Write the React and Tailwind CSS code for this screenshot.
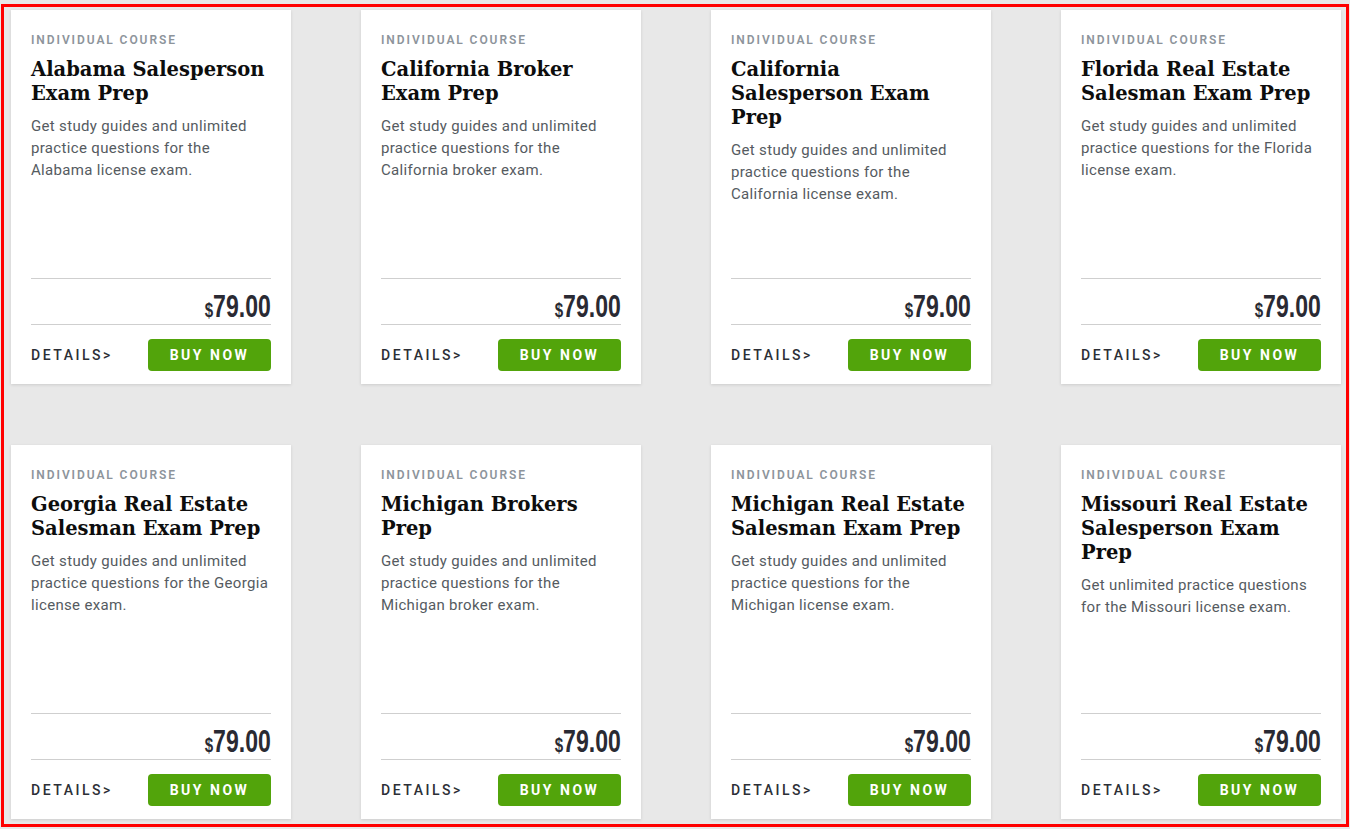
import React from 'react'

const courses = [
  {
    title: 'Alabama Salesperson Exam Prep',
    desc: 'Get study guides and unlimited practice questions for the Alabama license exam.',
  },
  {
    title: 'California Broker Exam Prep',
    desc: 'Get study guides and unlimited practice questions for the California broker exam.',
  },
  {
    title: 'California Salesperson Exam Prep',
    desc: 'Get study guides and unlimited practice questions for the California license exam.',
  },
  {
    title: 'Florida Real Estate Salesman Exam Prep',
    desc: 'Get study guides and unlimited practice questions for the Florida license exam.',
  },
  {
    title: 'Georgia Real Estate Salesman Exam Prep',
    desc: 'Get study guides and unlimited practice questions for the Georgia license exam.',
  },
  {
    title: 'Michigan Brokers Prep',
    desc: 'Get study guides and unlimited practice questions for the Michigan broker exam.',
  },
  {
    title: 'Michigan Real Estate Salesman Exam Prep',
    desc: 'Get study guides and unlimited practice questions for the Michigan license exam.',
  },
  {
    title: 'Missouri Real Estate Salesperson Exam Prep',
    desc: 'Get unlimited practice questions for the Missouri license exam.',
  },
]

const CourseCard = ({ title, desc }) => (
  <div className="flex h-[374px] flex-col bg-white px-5 pt-[23px] pb-[13px] shadow-[0_1px_3px_rgba(0,0,0,0.12)]">
    <div className="font-['Roboto',sans-serif] text-[12px] font-semibold leading-[14px] tracking-[0.16em] text-[#8d949b]">
      INDIVIDUAL COURSE
    </div>
    <h3 className="mt-[11px] font-['DejaVu_Serif',serif] text-[19.5px] font-bold leading-[24px] text-[#0d0d0d]">
      {title}
    </h3>
    <p className="mt-[9px] font-['Roboto',sans-serif] text-[15px] leading-[22px] tracking-[0.022em] text-[#555b61]">
      {desc}
    </p>

    <div className="mt-auto border-t border-[#cfcfcf]">
      <div className="flex h-[46px] items-end justify-end border-b border-[#cfcfcf] pb-[2px] font-['Liberation_Sans',sans-serif] font-bold text-[#2a2a33]">
        <span className="inline-block origin-right scale-x-[0.72] text-[32px] leading-none whitespace-nowrap">
          <span className="text-[21px]">$</span>79.00
        </span>
      </div>
      <div className="mt-[14px] flex items-center justify-between">
        <a className="font-['Roboto',sans-serif] text-[14px] font-medium tracking-[0.18em] text-[#2c2f36]">
          DETAILS&gt;
        </a>
        <button className="flex h-8 w-[123px] items-center justify-center rounded-[4px] bg-[#52a40b] font-['Roboto',sans-serif] text-[14px] font-bold tracking-[0.18em] text-white">
          BUY NOW
        </button>
      </div>
    </div>
  </div>
)

export default function App() {
  return (
    <div className="h-[829px] w-[1350px] overflow-hidden bg-[#e8e8e8] pt-1 pl-px">
      <div className="h-[823px] w-[1348px] border-[3px] border-[#ff0000] pt-[3px] pl-[7px]">
        <div className="grid grid-cols-[repeat(4,280px)] gap-x-[70px] gap-y-[61px]">
          {courses.map((c) => (
            <CourseCard key={c.title} {...c} />
          ))}
        </div>
      </div>
    </div>
  )
}
